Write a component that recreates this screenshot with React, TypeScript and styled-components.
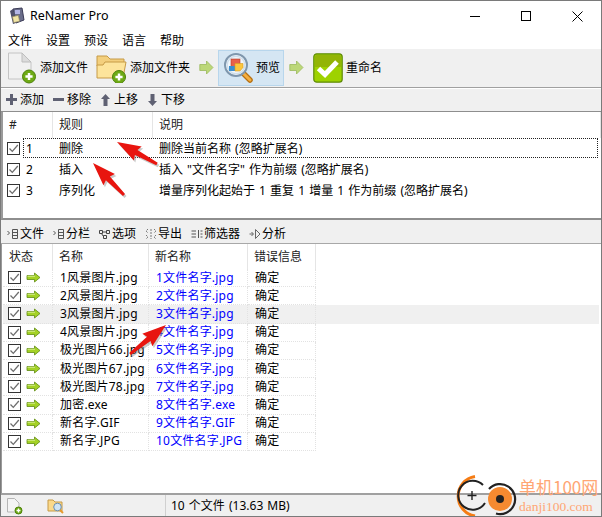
import { type ReactNode } from "react";
import styled, { createGlobalStyle } from "styled-components";

const FONT = `"Noto Sans", "Noto Sans CJK SC", sans-serif`;

const GlobalStyle = createGlobalStyle`
  html, body {
    margin: 0;
    padding: 0;
    background: #fff;
  }
  * {
    box-sizing: border-box;
  }
`;

const Window = styled.div`
  position: relative;
  width: 602px;
  height: 517px;
  display: flex;
  flex-direction: column;
  overflow: hidden;
  background: #fff;
  color: #000;
  font: 12px/16px ${FONT};
  border: 1px solid #7a7a7a;
`;

const TitleBar = styled.div`
  height: 30px;
  display: flex;
  align-items: center;
  padding-left: 7px;
  gap: 5px;
`;

const Title = styled.div`
  flex: 1;
  font-size: 12.5px;
`;

const WinButton = styled.div`
  width: 45px;
  height: 30px;
  display: flex;
  align-items: center;
  justify-content: center;
  margin-right: 1px;
`;

const MenuBar = styled.div`
  height: 18px;
  display: flex;
  align-items: center;
  padding: 2px 0 0 7px;
  gap: 14px;
`;

const MainToolbar = styled.div`
  height: 39px;
  display: flex;
  align-items: center;
  padding: 0 0 1px 5px;
  background: #f0f0f0;
  border-bottom: 1px solid #a0a0a0;
`;

const MainButton = styled.div<{ $active?: boolean; $width: number }>`
  width: ${(p) => p.$width}px;
  height: 36px;
  flex: none;
  display: flex;
  align-items: center;
  gap: 3px;
  padding-left: ${(p) => (p.$active ? 4 : 0)}px;
  background: ${(p) => (p.$active ? "#d5e6f3" : "transparent")};
  border: 1px solid ${(p) => (p.$active ? "#b8d6ec" : "transparent")};
`;

const FlowArrow = styled.div<{ $gap: number }>`
  flex: none;
  display: flex;
  margin: 0 ${(p) => p.$gap}px 0 5px;
`;

const SubToolbar = styled.div<{ $gap: number; $pad: number }>`
  height: 24px;
  flex: none;
  display: flex;
  align-items: center;
  gap: ${(p) => p.$gap}px;
  padding-left: ${(p) => p.$pad}px;
  background: #f0f0f0;
  border-top: 1px solid #fff;
  border-bottom: 1px solid #8e8e8e;
`;

const PanelToolbar = styled(SubToolbar)`
  height: 20px;
  border-top: none;
  border-bottom-color: #a8a8a8;
`;

const Tool = styled.div<{ $gap: number }>`
  display: flex;
  align-items: center;
  gap: ${(p) => p.$gap}px;
`;

const RulesPanel = styled.div`
  height: 108px;
  flex: none;
  background: #fff;
  border-left: 2px solid #9a9a9a;
  border-bottom: 2px solid #8e8e8e;
`;

const Splitter = styled.div`
  height: 4px;
  flex: none;
  background: #f0f0f0;
  display: flex;
  align-items: center;
  justify-content: center;
`;

const SplitterGrip = styled.div`
  width: 30px;
  height: 2px;
  background-image: radial-gradient(#9a9a9a 0.8px, transparent 1px);
  background-size: 4px 2px;
`;

const FilesPanel = styled.div`
  flex: 1;
  min-height: 0;
  background: #fff;
  padding: 0 2px 0 1px;
  border-left: 1px solid #9a9a9a;
`;

const HeaderRow = styled.div<{ $columns: string; $height: number }>`
  display: grid;
  grid-template-columns: ${(p) => p.$columns};
  height: ${(p) => p.$height}px;
  align-items: center;
  color: #222;
`;

const HeaderCell = styled.div`
  height: 100%;
  display: flex;
  align-items: center;
  padding-left: 6px;
  border-right: 1px solid #e5e5e5;
`;

const RuleRow = styled.div`
  position: relative;
  display: grid;
  grid-template-columns: 50px 100px 1fr;
  height: 21px;
  align-items: center;
`;

const FocusMark = styled.div`
  position: absolute;
  left: 20px;
  right: 3px;
  top: 0;
  bottom: 1px;
  border: 1px dotted #222;
`;

const RuleIndex = styled.div`
  display: flex;
  align-items: center;
  gap: 6px;
  padding-left: 4px;
`;

const RuleCell = styled.div`
  padding-left: 6px;
  white-space: nowrap;
  word-spacing: 1px;
`;

const FileRow = styled.div<{ $selected?: boolean }>`
  display: grid;
  grid-template-columns: 50px 96px 99px 68px 1fr;
  height: 18.2px;
  align-items: center;
  background: ${(p) => (p.$selected ? "#f0f0f0" : "transparent")};
`;

const FileCell = styled.div<{ $blue?: boolean; $last?: boolean }>`
  height: 100%;
  display: flex;
  align-items: center;
  padding-left: 7px;
  white-space: nowrap;
  letter-spacing: 0.2px;
  color: ${(p) => (p.$blue ? "#0000ff" : "#000")};
  border-right: ${(p) => (p.$last ? "none" : "1px dotted #e2e2e2")};
  border-bottom: ${(p) => (p.$last ? "none" : "1px dotted #e2e2e2")};
`;

const StateCell = styled(FileCell)`
  padding-left: 5px;
  gap: 5px;
`;

const CheckBox = styled.div`
  width: 13px;
  height: 13px;
  flex: none;
  display: flex;
  align-items: center;
  justify-content: center;
  background: #fff;
  border: 1px solid #333;
`;

const StatusBar = styled.div`
  height: 23px;
  flex: none;
  display: flex;
  align-items: center;
  background: #f0f0f0;
  border-top: 2px solid #a0a0a0;
`;

const StatusIcons = styled.div`
  width: 165px;
  height: 100%;
  display: flex;
  align-items: center;
  padding-left: 5px;
  gap: 23px;
  border-right: 1px solid #d0d0d0;
`;

const StatusText = styled.div`
  padding-left: 5px;
  word-spacing: 1px;
`;

const Overlay = styled.svg`
  position: absolute;
  left: -1px;
  top: -1px;
  pointer-events: none;
`;

const Watermark = styled.div`
  position: absolute;
  left: 452px;
  top: 474px;
  display: flex;
  align-items: flex-start;
  gap: 2px;
  pointer-events: none;
`;

const WatermarkText = styled.div`
  display: flex;
  flex-direction: column;
  color: #ffa674;
  margin-top: 1px;
`;

const WatermarkName = styled.div`
  font: 17px/21px "Noto Sans CJK SC", sans-serif;
  white-space: nowrap;
`;

const WatermarkUrl = styled.div`
  font: 13.5px/18px "Liberation Serif", serif;
  margin-top: 1px;
  white-space: nowrap;
`;

const Check = () => (
  <CheckBox>
    <svg width="11" height="11" viewBox="0 0 11 11">
      <path d="M1.5 5.5 4.3 8.4 9.8 2" fill="none" stroke="#6e6e6e" strokeWidth="1.3" />
    </svg>
  </CheckBox>
);

const StatusArrow = () => (
  <svg width="15" height="11" viewBox="0 0 15 11">
    <path d="M1 3.5H8.5V1L14 5.5 8.5 10V7.5H1Z" fill="#a4d225" stroke="#5f8a12" strokeWidth="0.8" />
    <path d="M1.5 4.2H9" stroke="#e0f2a0" strokeWidth="0.9" />
  </svg>
);

const GreenFlow = () => (
  <svg width="15" height="15" viewBox="0 0 15 15">
    <path d="M.8 4.5H7.5V1L14 7.5 7.5 14V10.5H.8Z" fill="#bcd778" stroke="#9bb95c" strokeWidth="0.8" />
  </svg>
);

const PlusBadge = ({ cx, cy, r }: { cx: number; cy: number; r: number }) => (
  <g>
    <circle cx={cx} cy={cy} r={r} fill="#6eaa14" stroke="#4c8009" strokeWidth="1" />
    <path
      d={`M${cx - r * 0.55} ${cy}H${cx + r * 0.55}M${cx} ${cy - r * 0.55}V${cy + r * 0.55}`}
      stroke="#fff"
      strokeWidth={r * 0.38}
    />
  </g>
);

const FileIcon = () => (
  <svg width="30" height="32" viewBox="0 0 30 32">
    <path d="M1.5 1H15L24 10V27H1.5Z" fill="#f1f1f1" stroke="#c4c4c4" />
    <path d="M15 1V10H24Z" fill="#dcdcdc" stroke="#bdbdbd" />
    <PlusBadge cx={22} cy={24.5} r={6.5} />
  </svg>
);

const FolderIcon = () => (
  <svg width="31" height="30" viewBox="0 0 31 30">
    <path d="M1 3H11L14 6H28V13H1Z" fill="#f3cf7d" stroke="#c69a46" />
    <path d="M1 25V12H7L9 9H30L27 25Z" fill="#fde49b" stroke="#c69a46" />
    <PlusBadge cx={23} cy={24} r={6.5} />
  </svg>
);

const SearchIcon = () => (
  <svg width="30" height="32" viewBox="0 0 30 32">
    <path d="M19 20 27 28" stroke="#b56f12" strokeWidth="5.5" strokeLinecap="round" />
    <path d="M20 21 27 28" stroke="#f5ae3e" strokeWidth="3" strokeLinecap="round" />
    <circle cx="13" cy="13" r="11" fill="#f2f7fb" stroke="#7f97ad" strokeWidth="2" />
    <circle cx="13" cy="13" r="8.800" fill="none" stroke="#cfdfec" strokeWidth="1.500" />
    <rect x="8" y="7" width="9" height="8" fill="#e8604a" stroke="#b33c2a" strokeWidth="0.6" />
    <rect x="6" y="14" width="6" height="5" fill="#3a8fd0" />
    <path d="M12 11.500H20V15.500L17 19H12Z" fill="#fbc63e" stroke="#d99c20" strokeWidth="0.6" />
  </svg>
);

const RenameIcon = () => (
  <svg width="30" height="30" viewBox="0 0 30 30">
    <rect x="0.8" y="0.8" width="28.4" height="28.4" rx="3" fill="#9ed200" stroke="#5f8a08" strokeWidth="1.2" />
    <path d="M2 3.5Q2 2 3.5 2H26.500Q28 2 28 3.500V14H2Z" fill="#93b406" />
    <path d="M5.500 15.500 12 21.500 24 9" fill="none" stroke="#fff" strokeWidth="5" />
  </svg>
);

const AppIcon = () => (
  <svg width="17" height="18" viewBox="0 0 17 18">
    <path d="M5 2 14 1 16 13 8 16Z" fill="#6a6d8a" stroke="#3a3a55" />
    <path d="M2 4 5 2 8 16 5 17Z" fill="#50506b" />
    <rect x="5" y="9" width="6" height="6" fill="#f2e6a6" stroke="#9a9060" strokeWidth="0.6" transform="rotate(-12 8 12)" />
    <rect x="7" y="3" width="5" height="4" fill="#b4b6e6" />
  </svg>
);

type Glyph = "plus" | "minus" | "up" | "down";

const glyphs: Record<Glyph, string> = {
  plus: "M4 0H7V4H11V7H7V11H4V7H0V4H4Z",
  minus: "M0 4H11V7H0Z",
  up: "M5.500 0 10 5H7.500V12H3.500V5H1Z",
  down: "M3.500 0H7.500V7H10L5.500 12 1 7H3.500Z",
};

const EditGlyph = ({ name }: { name: Glyph }) => (
  <svg width="11" height="12" viewBox="0 0 11 12">
    <path d={glyphs[name]} fill="#5f6173" />
  </svg>
);

type PanelGlyph = "file" | "columns" | "options" | "export" | "filter" | "analyze";

const listGlyph = "M.5 3 2.500 5 .5 7M5.500 1.500H10.500V10.500H5.500ZM5.500 4.500H10.500M5.500 7.500H10.500";

const PanelIcon = ({ name }: { name: PanelGlyph }) => {
  const paths: Record<PanelGlyph, ReactNode> = {
    file: <path d={listGlyph} fill="none" stroke="#555" />,
    columns: <path d={listGlyph} fill="none" stroke="#555" />,
    options: (
      <path d="M.5 2.500H3.500V5.500H.5ZM7.500 2.500H10.500V5.500H7.500ZM4.500 7.500H7.500V10.500H4.500ZM3.500 4H7.500M2.500 5.500 4.500 8.500" fill="none" stroke="#444" />
    ),
    export: (
      <path d="M3 1 1 3 3 5M1 7 3 9 1 11M9 1 11 3 9 5M11 7 9 9 11 11M6 1V11" fill="none" stroke="#777" strokeDasharray="2 1" />
    ),
    filter: <path d="M.5 3H5M.5 6H5M.5 9H5M7.500 2V10M9.500 3H11.500M9.500 6H11.500M9.500 9H11.500" fill="none" stroke="#555" />,
    analyze: <path d="M.5 6H4M2.500 4 4.500 6 2.500 8M6.500 1.500V10.500L11 6Z" fill="none" stroke="#666" />,
  };
  return (
    <svg width="12" height="12" viewBox="0 0 12 12">
      {paths[name]}
    </svg>
  );
};

// tapered red pointer with the soft grey shadow of the screenshot markup
const pointer = (tx: number, ty: number, bx: number, by: number) => {
  const len = Math.hypot(bx - tx, by - ty);
  const ux = (bx - tx) / len;
  const uy = (by - ty) / len;
  const nx = -uy;
  const ny = ux;
  const at = (along: number, side: number) =>
    `${(tx + ux * along + nx * side).toFixed(1)},${(ty + uy * along + ny * side).toFixed(1)}`;
  return [at(0, 0), at(len * 0.52, 8), at(len * 0.48, 2.8), at(len, 1.4), at(len, -1.4), at(len * 0.48, -2.8), at(len * 0.52, -8)].join(" ");
};

const arrows = [
  pointer(117, 142, 157, 164),
  pointer(93, 163, 124, 195),
  pointer(166, 325, 130, 354),
];

const files = [
  ["1风景图片.jpg", "1文件名字.jpg"],
  ["2风景图片.jpg", "2文件名字.jpg"],
  ["3风景图片.jpg", "3文件名字.jpg"],
  ["4风景图片.jpg", "4文件名字.jpg"],
  ["极光图片66.jpg", "5文件名字.jpg"],
  ["极光图片67.jpg", "6文件名字.jpg"],
  ["极光图片78.jpg", "7文件名字.jpg"],
  ["加密.exe", "8文件名字.exe"],
  ["新名字.GIF", "9文件名字.GIF"],
  ["新名字.JPG", "10文件名字.JPG"],
];

const rules = [
  ["1", "删除", "删除当前名称 (忽略扩展名)"],
  ["2", "插入", "插入 \"文件名字\" 作为前缀 (忽略扩展名)"],
  ["3", "序列化", "增量序列化起始于 1 重复 1 增量 1 作为前缀 (忽略扩展名)"],
];

const panelTools: [PanelGlyph, string][] = [
  ["file", "文件"],
  ["columns", "分栏"],
  ["options", "选项"],
  ["export", "导出"],
  ["filter", "筛选器"],
  ["analyze", "分析"],
];

const editTools: [Glyph, string][] = [
  ["plus", "添加"],
  ["minus", "移除"],
  ["up", "上移"],
  ["down", "下移"],
];

export default function App() {
  return (
    <>
      <GlobalStyle />
      <Window>
        <TitleBar>
          <AppIcon />
          <Title>ReNamer Pro</Title>
          <WinButton>
            <svg width="11" height="11" viewBox="0 0 11 11">
              <path d="M0 5.500H10" stroke="#000" />
            </svg>
          </WinButton>
          <WinButton>
            <svg width="11" height="11" viewBox="0 0 11 11">
              <rect x="0.500" y="0.500" width="9" height="9" fill="none" stroke="#000" />
            </svg>
          </WinButton>
          <WinButton>
            <svg width="11" height="11" viewBox="0 0 11 11">
              <path d="M.5.500 10.500 10.500M10.500.500 .5 10.500" stroke="#000" />
            </svg>
          </WinButton>
        </TitleBar>
        <MenuBar>
          {["文件", "设置", "预设", "语言", "帮助"].map((m) => (
            <span key={m}>{m}</span>
          ))}
        </MenuBar>
        <MainToolbar>
          <MainButton $width={89}>
            <FileIcon />
            添加文件
          </MainButton>
          <MainButton $width={99}>
            <FolderIcon />
            添加文件夹
          </MainButton>
          <FlowArrow $gap={4}>
            <GreenFlow />
          </FlowArrow>
          <MainButton $active $width={66}>
            <SearchIcon />
            预览
          </MainButton>
          <FlowArrow $gap={8}>
            <GreenFlow />
          </FlowArrow>
          <MainButton $width={80}>
            <RenameIcon />
            重命名
          </MainButton>
        </MainToolbar>
        <SubToolbar $gap={9} $pad={5}>
          {editTools.map(([g, label]) => (
            <Tool key={label} $gap={3}>
              <EditGlyph name={g} />
              {label}
            </Tool>
          ))}
        </SubToolbar>
        <RulesPanel>
          <HeaderRow $columns="50px 100px 1fr" $height={26}>
            <HeaderCell>#</HeaderCell>
            <HeaderCell>规则</HeaderCell>
            <HeaderCell>说明</HeaderCell>
          </HeaderRow>
          {rules.map(([n, name, desc], i) => (
            <RuleRow key={n}>
              {i === 0 && <FocusMark />}
              <RuleIndex>
                <Check />
                {n}
              </RuleIndex>
              <RuleCell>{name}</RuleCell>
              <RuleCell>{desc}</RuleCell>
            </RuleRow>
          ))}
        </RulesPanel>
        <Splitter>
          <SplitterGrip />
        </Splitter>
        <PanelToolbar $gap={9} $pad={6}>
          {panelTools.map(([g, label]) => (
            <Tool key={label} $gap={1}>
              <PanelIcon name={g} />
              {label}
            </Tool>
          ))}
        </PanelToolbar>
        <FilesPanel>
          <HeaderRow $columns="50px 96px 99px 68px" $height={25}>
            <HeaderCell>状态</HeaderCell>
            <HeaderCell>名称</HeaderCell>
            <HeaderCell>新名称</HeaderCell>
            <HeaderCell>错误信息</HeaderCell>
          </HeaderRow>
          {files.map(([name, next], i) => (
            <FileRow key={next} $selected={i === 2}>
              <StateCell>
                <Check />
                <StatusArrow />
              </StateCell>
              <FileCell>{name}</FileCell>
              <FileCell $blue>{next}</FileCell>
              <FileCell>确定</FileCell>
              <FileCell $last />
            </FileRow>
          ))}
        </FilesPanel>
        <StatusBar>
          <StatusIcons>
            <svg width="18" height="18" viewBox="0 0 18 18">
              <path d="M1.500 1.500H8.500L13 6V15H1.500Z" fill="#f4f4f4" stroke="#b5b5b5" />
              <PlusBadge cx={12.5} cy={13.5} r={3.5} />
            </svg>
            <svg width="18" height="18" viewBox="0 0 18 18">
              <path d="M1 3H6L8 5H15V14H1Z" fill="#fbd98a" stroke="#c69a46" />
              <circle cx="10.500" cy="10" r="3.800" fill="#cfe4f5" stroke="#6d8fae" />
              <path d="M13 13 16 16" stroke="#e79a2c" strokeWidth="2" />
            </svg>
          </StatusIcons>
          <StatusText>10 个文件 (13.63 MB)</StatusText>
        </StatusBar>
        <Overlay width="602" height="517" viewBox="0 0 602 517">
          {arrows.map((points) => (
            <polygon key={points} points={points} fill="#8c8c8c" opacity="0.45" transform="translate(1.500 2)" />
          ))}
          {arrows.map((points) => (
            <polygon key={points} points={points} fill="#e8150f" />
          ))}
        </Overlay>
        <Watermark>
          <svg width="64" height="43" viewBox="0 0 64 43">
            <path d="M22 1.500A20 20 0 0 0 22 41" fill="none" stroke="#f57c14" strokeWidth="3" />
            <path d="M30 10A14.500 14.500 0 1 0 32 28" fill="none" stroke="#222" strokeWidth="2" />
            <path d="M14.500 20.500H23.500M19 16V25" stroke="#222" strokeWidth="1.400" />
            <circle cx="47" cy="24" r="12" fill="#f58a30" />
            <path d="M36 14A15 15 0 1 1 43 38.500" fill="none" stroke="#222" strokeWidth="2.200" />
            <circle cx="47" cy="24" r="4" fill="#222" />
          </svg>
          <WatermarkText>
            <WatermarkName>单机100网</WatermarkName>
            <WatermarkUrl>danji100.com</WatermarkUrl>
          </WatermarkText>
        </Watermark>
      </Window>
    </>
  );
}
